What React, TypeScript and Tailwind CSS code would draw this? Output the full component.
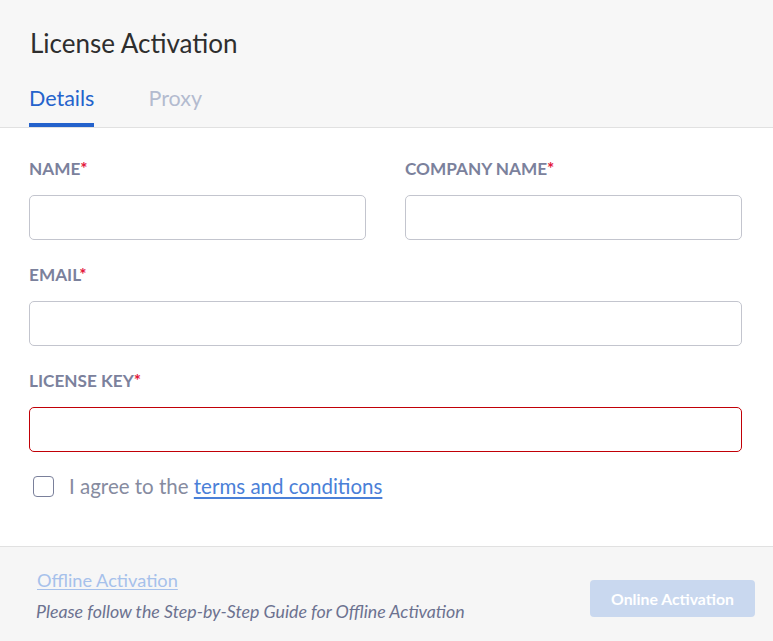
const font = { fontFamily: "Lato, 'Noto Sans', sans-serif" };

const Label = ({ text }: { text: string }) => (
  <label className="block text-[17.2px] leading-[20px] font-bold uppercase text-[#7b819c] mb-[16px]">
    {text}
    <span className="text-[#e3163a]">*</span>
  </label>
);

const Input = () => (
  <input
    type="text"
    className="block w-full h-[45px] rounded-[5px] border border-[#c3c5ce] bg-white px-3 outline-none"
  />
);

export default function App() {
  return (
    <div className="w-full h-[641px] flex flex-col bg-white" style={font}>
      <div className="bg-[#f7f7f7] border-b border-[#e1e1e1] px-[30px] pt-[28px]">
        <h1 className="text-[26px] leading-[30px] text-[#2e2e2e]">License Activation</h1>
        <div className="flex gap-[54px] mt-[28px]">
          <div className="flex flex-col">
            <span className="text-[21.5px] leading-[24px] text-[#2563cc] pb-[13px] -ml-px">Details</span>
            <div className="h-[4px] bg-[#2462cc] -ml-px w-[65px]" />
          </div>
          <div className="flex flex-col">
            <span className="text-[21.5px] leading-[24px] text-[#b3bbcf] pb-[13px]">Proxy</span>
          </div>
        </div>
      </div>

      <div className="px-[29px] pr-[31px] pt-[31px] pb-[46px] border-b border-[#e1e1e1]">
        <div className="grid grid-cols-2 gap-x-[39px]">
          <div>
            <Label text="Name" />
            <Input />
          </div>
          <div>
            <Label text="Company Name" />
            <Input />
          </div>
        </div>
        <div className="mt-[25px]">
          <Label text="Email" />
          <Input />
        </div>
        <div className="mt-[25px]">
          <Label text="License Key" />
          <div className="h-[45px] rounded-[5px] border border-red-700 bg-white">
            <input
              type="text"
              className="block w-full h-full rounded-[5px] border-0 bg-transparent px-3 outline-none focus:outline-none"
            />
          </div>
        </div>
        <div className="flex items-center h-[28px] mt-[20px] pl-[4px] gap-[15px]">
          <span className="w-[21px] h-[21px] rounded-[4px] border-[1.5px] border-[#7a809b] bg-white" />
          <span className="text-[20.5px] leading-[28px] text-[#868b9f]">
            I agree to the{" "}
            <a href="#" className="text-[#4a80d8] underline underline-offset-[3px]">
              terms and conditions
            </a>
          </span>
        </div>
      </div>

      <div className="flex-1 bg-[#f6f6f6] flex justify-between items-start pl-[36px] pr-[18px] pt-[22px]">
        <div className="flex flex-col">
          <a href="#" className="text-[18.2px] leading-[22px] text-[#a6c1eb] underline underline-offset-[2px] ml-px">
            Offline Activation
          </a>
          <span className="text-[17.8px] leading-[22px] italic text-[#6c7290] mt-[9px]">
            Please follow the Step-by-Step Guide for Offline Activation
          </span>
        </div>
        <button className="mt-[11px] w-[165px] h-[37px] rounded-[4px] bg-[#c9d8ef] text-white font-bold text-[15.8px]">
          Online Activation
        </button>
      </div>
    </div>
  );
}
